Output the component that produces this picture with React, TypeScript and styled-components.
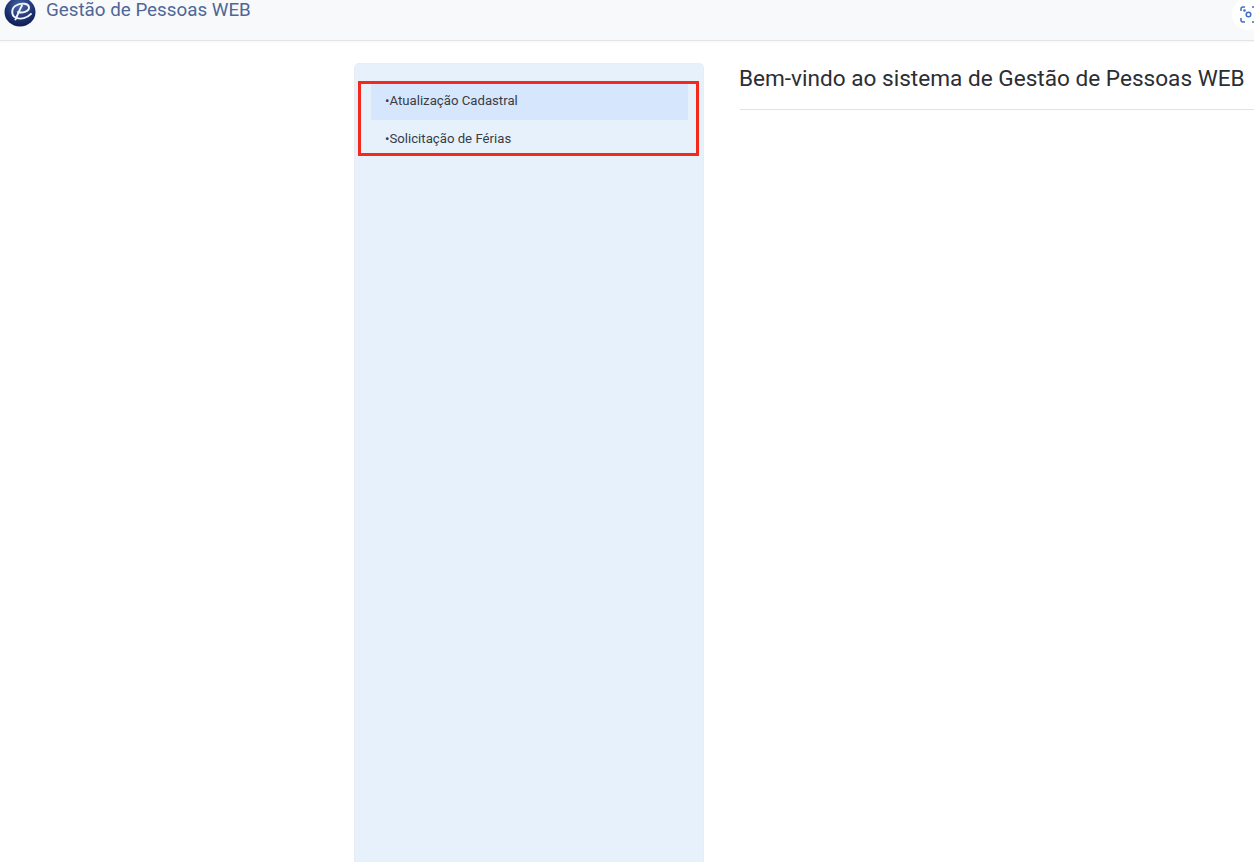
import React from "react"
import styled, { createGlobalStyle } from "styled-components"

const GlobalStyle = createGlobalStyle`
  html, body {
    margin: 0;
    padding: 0;
    height: 100%;
    overflow: hidden;
    background: #fff;
    font-family: Roboto, "Liberation Sans", sans-serif;
  }
`

function Logo() {
  return (
    <LogoSvg viewBox="0 0 32 32" preserveAspectRatio="none">
      <defs>
        <radialGradient id="ball" cx="50%" cy="30%" r="75%">
          <stop offset="0%" stopColor="#4a69a8" />
          <stop offset="60%" stopColor="#1c3172" />
          <stop offset="100%" stopColor="#0d1a47" />
        </radialGradient>
      </defs>
      <circle cx="16" cy="16" r="15.500" fill="url(#ball)" />
      <path
        d="M12 22C7 20 7 12 12 9c5-3 13-2.500 13 2.500 0 4-7 6-11 4.500M18 9c-2 4-4 9-6.500 15M12 22c5 2.500 11 .5 15-4"
        fill="none"
        stroke="#f1f4fa"
        strokeWidth="2"
        strokeLinecap="round"
      />
    </LogoSvg>
  )
}

function App() {
  return (
    <>
      <GlobalStyle />
      <Page>
        <Header>
          <Brand>
            <Logo />
            <BrandName>Gestão de Pessoas WEB</BrandName>
          </Brand>
          <LensButton>
            <svg width="17" height="17" viewBox="0 0 17 17" fill="none" stroke="#3f6fc4" strokeWidth="1.500">
              <path d="M1 5V3a2 2 0 0 1 2-2h2M12 1h2a2 2 0 0 1 2 2v2M16 12v2a2 2 0 0 1-2 2h-2M5 16H3a2 2 0 0 1-2-2v-2" />
              <circle cx="8.500" cy="8.500" r="2.300" />
              <circle cx="4.500" cy="4.500" r="0.600" fill="#3f6fc4" />
            </svg>
          </LensButton>
        </Header>
        <Body>
          <Sidebar>
            <MenuList>
              <MenuItem $active>•Atualização Cadastral</MenuItem>
              <MenuItem>•Solicitação de Férias</MenuItem>
              <Highlight />
            </MenuList>
          </Sidebar>
          <Main>
            <Title>Bem-vindo ao sistema de Gestão de Pessoas WEB</Title>
          </Main>
        </Body>
      </Page>
    </>
  )
}

export default App

const Page = styled.div`
  width: 1254px;
  height: 862px;
  display: flex;
  flex-direction: column;
  overflow: hidden;
`
const Header = styled.header`
  flex: 0 0 41px;
  box-sizing: border-box;
  height: 41px;
  display: flex;
  align-items: flex-start;
  justify-content: space-between;
  background: #f8f9fb;
  border-bottom: 1px solid #e3e4e7;
  box-shadow: 0 1px 2px rgba(0, 0, 0, 0.04);
  overflow: hidden;
`
const Brand = styled.div`
  display: flex;
  align-items: flex-start;
  gap: 10px;
  margin-top: -3px;
  padding-left: 4px;
`
const LogoSvg = styled.svg`
  width: 32px;
  height: 30px;
  flex: none;
`
const BrandName = styled.span`
  font-size: 18.800px;
  line-height: 26px;
  color: #4f6796;
`
const LensButton = styled.div`
  width: 32px;
  height: 32px;
  margin: -2px -10px 0 0;
  border-radius: 50%;
  background: #fff;
  display: flex;
  align-items: center;
  justify-content: flex-start;
  padding-left: 8px;
  box-sizing: border-box;
`
const Body = styled.div`
  flex: 1;
  display: flex;
  align-items: stretch;
  padding: 22px 0 0 354px;
  min-height: 0;
`
const Sidebar = styled.aside`
  width: 350px;
  flex: none;
  box-sizing: border-box;
  padding: 19px 15px 0 16px;
  background: #e6f1fc;
  border: 1px solid #e9edf3;
  border-bottom: 0;
  border-radius: 5px 5px 0 0;
`
const MenuList = styled.nav`
  position: relative;
  display: flex;
  flex-direction: column;
`
const MenuItem = styled.div<{ $active?: boolean }>`
  height: 37px;
  box-sizing: border-box;
  display: flex;
  align-items: center;
  padding-left: 14px;
  padding-bottom: ${(p) => (p.$active ? "2px" : "0")};
  font-size: 13.200px;
  color: #3a3c44;
  background: ${(p) => (p.$active ? "#d6e6fc" : "transparent")};
`
const Highlight = styled.div`
  position: absolute;
  left: -13px;
  top: -2px;
  width: 341px;
  height: 75px;
  box-sizing: border-box;
  border: 3px solid #f5291b;
  pointer-events: none;
`
const Main = styled.main`
  flex: 1;
  min-width: 0;
  margin-left: 36px;
  padding-top: 1px;
`
const Title = styled.h1`
  margin: 0;
  height: 46px;
  box-sizing: border-box;
  font-size: 22.600px;
  font-weight: 400;
  line-height: 29px;
  text-indent: -1px;
  white-space: nowrap;
  color: #2b2e33;
  border-bottom: 1px solid #e2e3e5;
`
